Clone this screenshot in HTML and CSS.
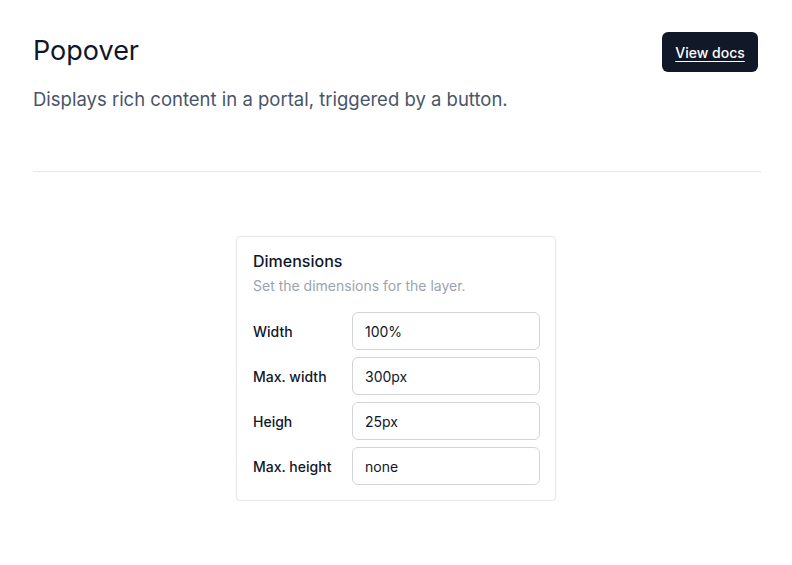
FILE: index.html
```html
<!DOCTYPE html>
<html>
<head>
<meta charset="utf-8">
<link rel="stylesheet" href="styles.css">
</head>
<body>
<div class="page">
  <header class="header">
    <div class="header-text">
      <h1 class="title">Popover</h1>
      <p class="lead">Displays rich content in a portal, triggered by a button.</p>
    </div>
    <a class="docs-btn" href="#">View docs</a>
  </header>
  <hr class="divider">
  <div class="preview">
    <div class="card">
      <h4 class="card-title">Dimensions</h4>
      <p class="card-desc">Set the dimensions for the layer.</p>
      <div class="rows">
        <div class="row"><label class="row-label">Width</label><div class="input">100%</div></div>
        <div class="row"><label class="row-label">Max. width</label><div class="input">300px</div></div>
        <div class="row"><label class="row-label">Heigh</label><div class="input">25px</div></div>
        <div class="row"><label class="row-label">Max. height</label><div class="input">none</div></div>
      </div>
    </div>
  </div>
</div>
</body>
</html>
```
FILE: styles.css
```css
* { box-sizing: border-box; }
html, body { margin: 0; padding: 0; background: #ffffff; }
body {
  font-family: Inter, "Noto Sans", sans-serif;
  color: #0f172a;
}
.page {
  padding: 32px 33px 0 33px;
  width: 794px;
}
.header {
  display: flex;
  justify-content: space-between;
  align-items: flex-start;
}
.title {
  margin: 0;
  font-size: 27px;
  font-weight: 400;
  line-height: 38px;
  color: #0f172a;
}
.lead {
  margin: 15px 0 0 0;
  font-size: 18.5px;
  line-height: 28px;
  color: #475569;
}
.docs-btn {
  display: inline-flex;
  align-items: center;
  justify-content: center;
  height: 40px;
  width: 96px;
  margin-right: 3px;
  background: #111827;
  color: #ffffff;
  border-radius: 6px;
  font-size: 14px;
  font-weight: 500;
  text-decoration: underline;
  text-underline-offset: 3px;
}
.divider {
  margin: 58px 0 0 0;
  border: 0;
  border-top: 1px solid #e5e7eb;
  width: 728px;
}
.preview {
  display: flex;
  justify-content: center;
  padding-top: 64px;
  padding-right: 2px;
}
.card {
  width: 320px;
  border: 1px solid #e5e7eb;
  border-radius: 4px;
  padding: 13px 15px 15px 16px;
  box-shadow: 0 1px 3px rgba(0,0,0,0.04);
}
.card-title {
  margin: 0;
  font-size: 16px;
  font-weight: 500;
  line-height: 22px;
  color: #0f172a;
}
.card-desc {
  margin: 4px 0 0 0;
  font-size: 14px;
  line-height: 20px;
  color: #9ca3af;
}
.rows {
  margin-top: 16px;
  display: flex;
  flex-direction: column;
  gap: 7px;
}
.row {
  display: grid;
  grid-template-columns: 99px 1fr;
  align-items: center;
}
.row-label {
  font-size: 14px;
  font-weight: 500;
  color: #0f172a;
}
.input {
  height: 38px;
  border: 1px solid #d1d5db;
  border-radius: 6px;
  padding: 0 12px;
  display: flex;
  align-items: center;
  font-size: 14px;
  color: #0f172a;
}
```
